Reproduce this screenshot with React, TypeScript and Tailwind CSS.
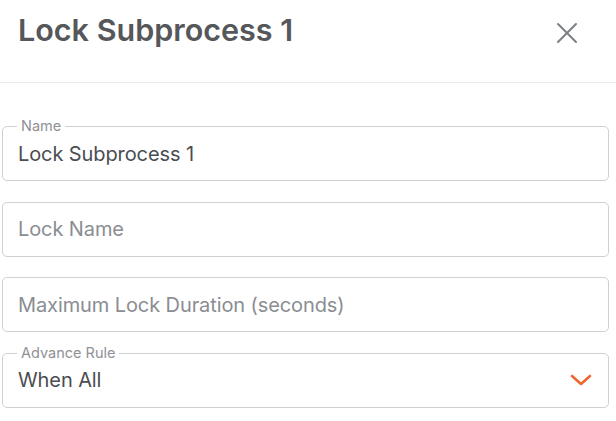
import React from "react";

const font = { fontFamily: "Inter, 'Noto Sans', sans-serif" };

function Field({
  label,
  value,
  placeholder,
  select,
}: {
  label?: string;
  value?: string;
  placeholder?: string;
  select?: boolean;
}) {
  return (
    <div className="relative h-[55px] rounded-[5px] border border-[#cdd0d5] flex items-center pl-[15px] pr-[16px]">
      {label && (
        <span className="absolute -top-[9px] left-[14px] bg-white px-[4px] text-[14.5px] leading-[16px] text-[#8e9196]">
          {label}
        </span>
      )}
      {value ? (
        <span className="text-[20px] text-[#4a4d52] tracking-[-0.1px]">{value}</span>
      ) : (
        <span className="text-[20px] text-[#8a8d92] tracking-[-0.1px]">{placeholder}</span>
      )}
      {select && (
        <svg
          className="ml-auto"
          width="22"
          height="14"
          viewBox="0 0 22 14"
          fill="none"
          stroke="#f0662e"
          strokeWidth="2.6"
          strokeLinecap="round"
          strokeLinejoin="round"
        >
          <path d="M2 3 L11 11 L20 3" />
        </svg>
      )}
    </div>
  );
}

export default function App() {
  return (
    <div className="w-[616px] h-[421px] bg-white overflow-hidden" style={font}>
      <div className="h-[83px] border-b border-[#e8e9ec] flex items-start justify-between pl-[18px] pr-[38px] pt-[10px]">
        <h1 className="text-[30.5px] leading-[40px] font-semibold text-[#55575b] tracking-[0px]">
          Lock Subprocess 1
        </h1>
        <svg
          className="mt-[12px]"
          width="22"
          height="22"
          viewBox="0 0 22 22"
          fill="none"
          stroke="#7c7f85"
          strokeWidth="2"
          strokeLinecap="round"
        >
          <path d="M2 2 L20 20 M20 2 L2 20" />
        </svg>
      </div>
      <div className="pt-[43px] pl-[2px] pr-[7px] flex flex-col gap-[20.67px]">
        <Field label="Name" value="Lock Subprocess 1" />
        <Field placeholder="Lock Name" />
        <Field placeholder="Maximum Lock Duration (seconds)" />
        <Field label="Advance Rule" value="When All" select />
      </div>
    </div>
  );
}
